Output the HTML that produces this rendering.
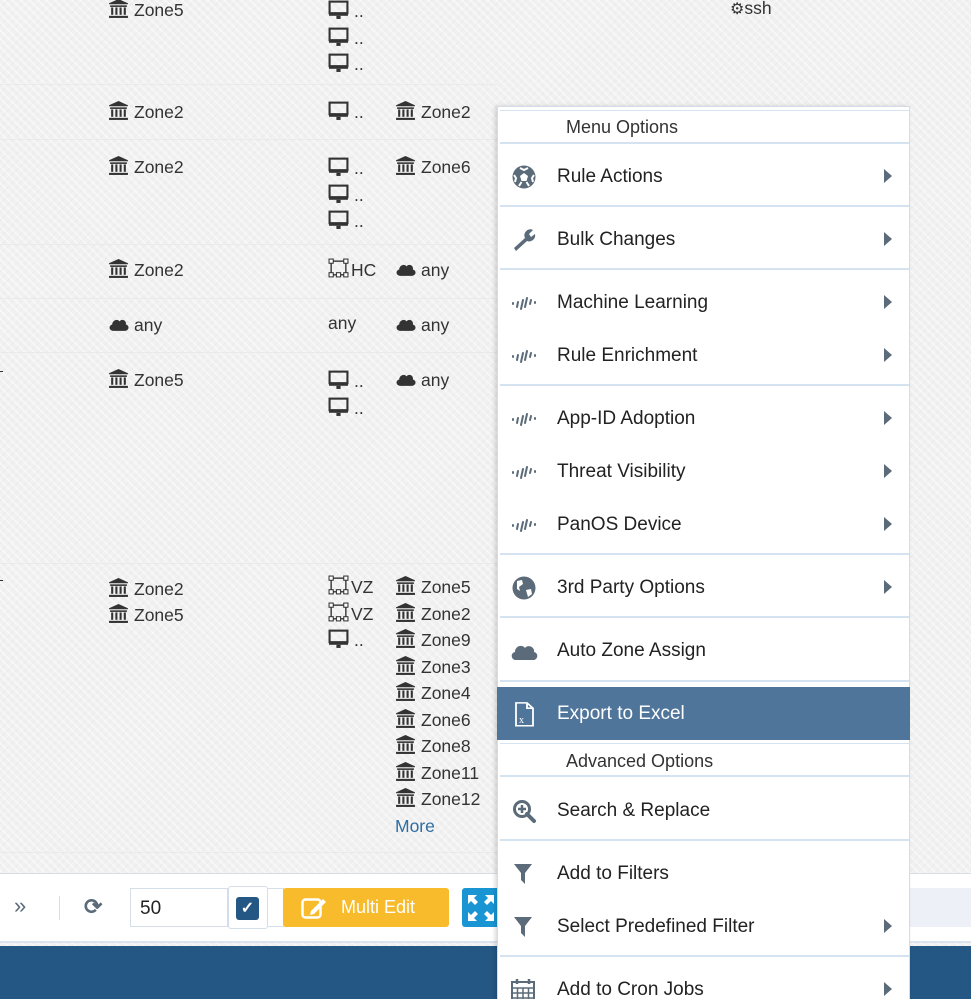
<!DOCTYPE html>
<html><head><meta charset="utf-8">
<style>
*{margin:0;padding:0;box-sizing:border-box}
html,body{width:971px;height:999px;overflow:hidden}
body{position:relative;font-family:"Liberation Sans",sans-serif;color:#333;
background-color:#f1f1f1;
background-image:repeating-linear-gradient(45deg,rgba(255,255,255,.45) 0 2px,transparent 2px 6px),repeating-linear-gradient(-45deg,rgba(0,0,0,.015) 0 2px,transparent 2px 6px);}
.t{position:absolute;font-size:17.5px;line-height:20px;white-space:nowrap;color:#333;margin-top:-2px}
.t svg{vertical-align:-3px;margin-right:5px}
.hl{position:absolute;left:0;width:497px;height:1px;background:#eaeaea}
#menu{position:absolute;left:497px;top:106px;width:413px;height:900px;background:#fff;border:1px solid #d3dde8;box-shadow:-2px 0 4px rgba(0,0,0,.15)}
.mi{position:absolute;left:0;width:411px;height:50px;font-size:19px;color:#222;line-height:50px;margin-top:1px}
.mi .tx{position:absolute;left:59px}
.mi .ic{position:absolute;left:12px;top:13px;width:28px;height:24px}
.mi .ar{position:absolute;left:386px;top:17px;width:0;height:0;border-top:7px solid transparent;border-bottom:7px solid transparent;border-left:8px solid #5b6b79}
.sep{position:absolute;left:2px;width:409px;height:2px;background:#d5e2ef}
.hd{position:absolute;left:68px;font-size:18px;color:#333}
</style></head><body>
<svg width="0" height="0" style="position:absolute">
<defs>
<symbol id="bank" viewBox="0 0 20 20"><path d="M10 1 L19 5 V6 H1 V5 Z" fill="#333"/><rect x="2" y="7" width="16" height="1.5" fill="#333"/><rect x="3" y="9" width="2" height="7" fill="#333"/><rect x="7" y="9" width="2" height="7" fill="#333"/><rect x="11" y="9" width="2" height="7" fill="#333"/><rect x="15" y="9" width="2" height="7" fill="#333"/><rect x="1" y="17" width="18" height="2" fill="#333"/></symbol>
<symbol id="mon" viewBox="0 0 20 20"><rect x="1.5" y="2.5" width="17" height="11" fill="none" stroke="#333" stroke-width="2"/><rect x="1" y="13" width="18" height="3" fill="#333"/><rect x="8" y="16" width="4" height="3" fill="#333"/></symbol>
<symbol id="cloud" viewBox="0 0 20 20"><path d="M5 17 C1 17 0 12 4 11 C4 7 9 5 11 8 C13 5 18 7 17 11 C21 12 20 17 16 17 Z" fill="#333"/></symbol>
<symbol id="net" viewBox="0 0 20 20"><rect x="3" y="3" width="14" height="13" fill="none" stroke="#333" stroke-width="1.3"/><rect x="1" y="1" width="4" height="4" fill="#fff" stroke="#333"/><rect x="15" y="1" width="4" height="4" fill="#fff" stroke="#333"/><rect x="1" y="14" width="4" height="4" fill="#fff" stroke="#333"/><rect x="15" y="14" width="4" height="4" fill="#fff" stroke="#333"/><rect x="8" y="14" width="4" height="4" fill="#fff" stroke="#333"/></symbol>
<symbol id="wave" viewBox="0 0 28 16"><g stroke="#5b6b79" stroke-width="2" stroke-linecap="round"><path d="M3 7 L3 8"/><path d="M7 11 L8 6"/><path d="M11 13 L13 4"/><path d="M15 11 L17 2"/><path d="M20 8 L21 4"/><path d="M25 7 L25 6"/></g></symbol>
</defs></svg>

<div class="hl" style="top:84px"></div>
<div class="hl" style="top:139px"></div>
<div class="hl" style="top:244px"></div>
<div class="hl" style="top:298px"></div>
<div class="hl" style="top:352px"></div>
<div class="hl" style="top:563px"></div>
<div class="hl" style="top:852px"></div>
<div style="position:absolute;left:0;top:371px;width:3px;height:1px;background:#333"></div>
<div style="position:absolute;left:0;top:580px;width:3px;height:1px;background:#333"></div>

<div class="t" style="left:108px;top:0px"><svg width="21" height="21"><use href="#bank"/></svg>Zone5</div>
<div class="t" style="left:108px;top:102px"><svg width="21" height="21"><use href="#bank"/></svg>Zone2</div>
<div class="t" style="left:108px;top:157px"><svg width="21" height="21"><use href="#bank"/></svg>Zone2</div>
<div class="t" style="left:108px;top:260px"><svg width="21" height="21"><use href="#bank"/></svg>Zone2</div>
<div class="t" style="left:108px;top:315px"><svg width="21" height="21"><use href="#cloud"/></svg>any</div>
<div class="t" style="left:108px;top:370px"><svg width="21" height="21"><use href="#bank"/></svg>Zone5</div>
<div class="t" style="left:108px;top:579px"><svg width="21" height="21"><use href="#bank"/></svg>Zone2</div>
<div class="t" style="left:108px;top:605px"><svg width="21" height="21"><use href="#bank"/></svg>Zone5</div>

<div class="t" style="left:328px;top:0px;line-height:26.5px"><svg width="21" height="21"><use href="#mon"/></svg>..<br><svg width="21" height="21"><use href="#mon"/></svg>..<br><svg width="21" height="21"><use href="#mon"/></svg>..</div>
<div class="t" style="left:328px;top:102px"><svg width="21" height="21"><use href="#mon"/></svg>..</div>
<div class="t" style="left:328px;top:157px;line-height:26.5px"><svg width="21" height="21"><use href="#mon"/></svg>..<br><svg width="21" height="21"><use href="#mon"/></svg>..<br><svg width="21" height="21"><use href="#mon"/></svg>..</div>
<div class="t" style="left:328px;top:260px"><svg width="21" height="21" style="margin-right:2px"><use href="#net"/></svg>HC</div>
<div class="t" style="left:328px;top:315px">any</div>
<div class="t" style="left:328px;top:370px;line-height:26.5px"><svg width="21" height="21"><use href="#mon"/></svg>..<br><svg width="21" height="21"><use href="#mon"/></svg>..</div>
<div class="t" style="left:328px;top:576px;line-height:26.5px"><svg width="21" height="21" style="margin-right:2px"><use href="#net"/></svg>VZ<br><svg width="21" height="21" style="margin-right:2px"><use href="#net"/></svg>VZ<br><svg width="21" height="21"><use href="#mon"/></svg>..</div>

<div class="t" style="left:395px;top:102px"><svg width="21" height="21"><use href="#bank"/></svg>Zone2</div>
<div class="t" style="left:395px;top:157px"><svg width="21" height="21"><use href="#bank"/></svg>Zone6</div>
<div class="t" style="left:395px;top:260px"><svg width="21" height="21"><use href="#cloud"/></svg>any</div>
<div class="t" style="left:395px;top:315px"><svg width="21" height="21"><use href="#cloud"/></svg>any</div>
<div class="t" style="left:395px;top:370px"><svg width="21" height="21"><use href="#cloud"/></svg>any</div>
<div class="t" style="left:395px;top:576px;line-height:26.5px">
<svg width="21" height="21"><use href="#bank"/></svg>Zone5<br><svg width="21" height="21"><use href="#bank"/></svg>Zone2<br><svg width="21" height="21"><use href="#bank"/></svg>Zone9<br><svg width="21" height="21"><use href="#bank"/></svg>Zone3<br><svg width="21" height="21"><use href="#bank"/></svg>Zone4<br><svg width="21" height="21"><use href="#bank"/></svg>Zone6<br><svg width="21" height="21"><use href="#bank"/></svg>Zone8<br><svg width="21" height="21"><use href="#bank"/></svg>Zone11<br><svg width="21" height="21"><use href="#bank"/></svg>Zone12<br><span style="color:#2f6ea3">More</span></div>
<div class="t" style="left:730px;top:0px"><span style="font-size:16px">&#9881;</span>ssh</div>

<div style="position:absolute;left:0;top:873px;width:971px;height:68px;background:#fff;border-top:1px solid #d8dde3"></div>
<div style="position:absolute;left:0;top:941px;width:971px;height:2px;background:#dbe4ee"></div>
<div style="position:absolute;left:0;top:946px;width:971px;height:53px;background:#245784"></div>
<div style="position:absolute;left:14px;top:893px;font-size:22px;color:#5b6b79">&#187;</div>
<div style="position:absolute;left:59px;top:896px;width:1px;height:24px;background:#d5dde5"></div>
<div style="position:absolute;left:84px;top:894px;font-size:22px;color:#5b6b79;font-weight:bold">&#10227;</div>
<div style="position:absolute;left:130px;top:888px;width:98px;height:39px;border:1px solid #d3dee9;background:#fff;font-size:19px;color:#222;padding:9px 0 0 9px">50</div>
<div style="position:absolute;left:228px;top:886px;width:40px;height:43px;border:1px solid #d3dee9;border-radius:3px;background:#fff"></div>
<div style="position:absolute;left:236px;top:897px;width:23px;height:23px;border-radius:3px;background:#245784;color:#fff;font-size:16px;text-align:center;line-height:23px;font-weight:bold">&#10003;</div>
<div style="position:absolute;left:268px;top:888px;width:16px;height:39px;border:1px solid #d3dee9;border-left:none"></div>
<div style="position:absolute;left:283px;top:888px;width:166px;height:39px;background:#f8bb2c;border-radius:3px;color:#fff;font-size:18px;line-height:39px">
<svg width="26" height="24" style="position:absolute;left:18px;top:8px" viewBox="0 0 26 24"><rect x="1.5" y="3.5" width="18" height="18" rx="3" fill="none" stroke="#fff" stroke-width="2.5"/><path d="M10 15 L22 3 L25 6 L13 18 L9 19 Z" fill="#fff"/></svg>
<span style="position:absolute;left:58px">Multi Edit</span></div>
<div style="position:absolute;left:462px;top:888px;width:36px;height:39px;background:#1a95d4;border-radius:3px 0 0 3px"><svg width="30" height="30" style="margin:5px 0 0 4px" viewBox="0 0 30 30"><path d="M2 2h9l-3 3 4 4-3 3-4-4-3 3z M28 2v9l-3-3-4 4-3-3 4-4-3-3z M2 28v-9l3 3 4-4 3 3-4 4 3 3z M28 28h-9l3-3-4-4 3-3 4 4 3-3z" fill="#fff"/></svg></div>
<div style="position:absolute;left:910px;top:888px;width:61px;height:39px;background:#edf1f7"></div>

<div id="menu">
<div class="sep" style="top:3px;height:1px"></div>
<div class="hd" style="top:10px">Menu Options</div>
<div class="sep" style="top:35px"></div>
<div class="mi" style="top:44px"><svg class="ic" viewBox="0 0 28 24"><circle cx="14" cy="12" r="11.5" fill="#5b6b79"/><path d="M14 8 L18 11 L16.5 16 L11.5 16 L10 11 Z" fill="#fff"/><path d="M10 3 L14 5 L18 3 M4 10 L6 13 L5 17 M24 10 L22 13 L23 17 M9 21 L11.5 17 M19 21 L16.5 17" stroke="#fff" stroke-width="2" fill="none"/></svg><span class="tx">Rule Actions</span><i class="ar"></i></div>
<div class="sep" style="top:98px"></div>
<div class="mi" style="top:107px"><svg class="ic" viewBox="0 0 28 24"><path d="M4 20 L15 10 A6 6 0 0 1 23 2 L19 6 L21 9 L25 6 A6 6 0 0 1 17 13 L6 23 Z" fill="#5b6b79"/></svg><span class="tx">Bulk Changes</span><i class="ar"></i></div>
<div class="sep" style="top:161px"></div>
<div class="mi" style="top:170px"><svg class="ic" viewBox="0 0 28 16" style="top:18px;height:16px"><use href="#wave"/></svg><span class="tx">Machine Learning</span><i class="ar"></i></div>
<div class="mi" style="top:223px"><svg class="ic" viewBox="0 0 28 16" style="top:18px;height:16px"><use href="#wave"/></svg><span class="tx">Rule Enrichment</span><i class="ar"></i></div>
<div class="sep" style="top:277px"></div>
<div class="mi" style="top:286px"><svg class="ic" viewBox="0 0 28 16" style="top:18px;height:16px"><use href="#wave"/></svg><span class="tx">App-ID Adoption</span><i class="ar"></i></div>
<div class="mi" style="top:339px"><svg class="ic" viewBox="0 0 28 16" style="top:18px;height:16px"><use href="#wave"/></svg><span class="tx">Threat Visibility</span><i class="ar"></i></div>
<div class="mi" style="top:392px"><svg class="ic" viewBox="0 0 28 16" style="top:18px;height:16px"><use href="#wave"/></svg><span class="tx">PanOS Device</span><i class="ar"></i></div>
<div class="sep" style="top:446px"></div>
<div class="mi" style="top:455px"><svg class="ic" viewBox="0 0 28 24"><circle cx="14" cy="12" r="11.5" fill="#5b6b79"/><path d="M7 5 L12 4 L13 8 L9 11 L10 15 L7 13 Z M16 14 L21 13 L22 18 L18 21 Z" fill="#fff"/></svg><span class="tx">3rd Party Options</span><i class="ar"></i></div>
<div class="sep" style="top:509px"></div>
<div class="mi" style="top:518px"><svg class="ic" viewBox="0 0 28 24"><path d="M6 21 C1 21 0 14 5 13 C5 7 12 5 15 9 C18 5 25 8 24 13 C29 14 28 21 23 21 Z" fill="#5b6b79"/></svg><span class="tx">Auto Zone Assign</span></div>
<div class="sep" style="top:573px"></div>
<div class="mi" style="top:580px;left:-1px;width:413px;height:53px;background:#50759b;color:#fff;line-height:53px;margin-top:0"><svg class="ic" viewBox="0 0 28 24" style="left:13px;top:13px;height:28px" ><path d="M6 1 H17 L23 7 V27 H6 Z M17 1 V7 H23" fill="none" stroke="#fff" stroke-width="1.8" transform="scale(1 0.88)"/><text x="9" y="21" font-size="10" fill="#fff" font-family="Liberation Serif">x</text></svg><span class="tx" style="left:60px">Export to Excel</span></div>
<div class="sep" style="top:636px;height:1px"></div>
<div class="hd" style="top:644px">Advanced Options</div>
<div class="sep" style="top:668px"></div>
<div class="mi" style="top:678px"><svg class="ic" viewBox="0 0 28 24"><circle cx="12" cy="10" r="7.5" fill="none" stroke="#5b6b79" stroke-width="3"/><path d="M17 15 L24 22" stroke="#5b6b79" stroke-width="4" stroke-linecap="round"/><path d="M12 6 V14 M8 10 H16" stroke="#5b6b79" stroke-width="2.5"/></svg><span class="tx">Search &amp; Replace</span></div>
<div class="sep" style="top:732px"></div>
<div class="mi" style="top:741px"><svg class="ic" viewBox="0 0 28 24"><path d="M4 2 H22 L15 11 V22 L11 18 V11 Z" fill="#5b6b79"/></svg><span class="tx">Add to Filters</span></div>
<div class="mi" style="top:794px"><svg class="ic" viewBox="0 0 28 24"><path d="M4 2 H22 L15 11 V22 L11 18 V11 Z" fill="#5b6b79"/></svg><span class="tx">Select Predefined Filter</span><i class="ar"></i></div>
<div class="sep" style="top:848px"></div>
<div class="mi" style="top:857px"><svg class="ic" viewBox="0 0 28 24" style="top:14px"><rect x="2" y="3" width="22" height="21" fill="none" stroke="#5b6b79" stroke-width="2"/><path d="M2 9H24M2 14H24M2 19H24M7.5 9V24M13 9V24M18.5 9V24" stroke="#5b6b79" stroke-width="1.5"/><path d="M7 0V5M19 0V5" stroke="#5b6b79" stroke-width="2.5"/></svg><span class="tx">Add to Cron Jobs</span><i class="ar"></i></div>
</div>
</body></html>
